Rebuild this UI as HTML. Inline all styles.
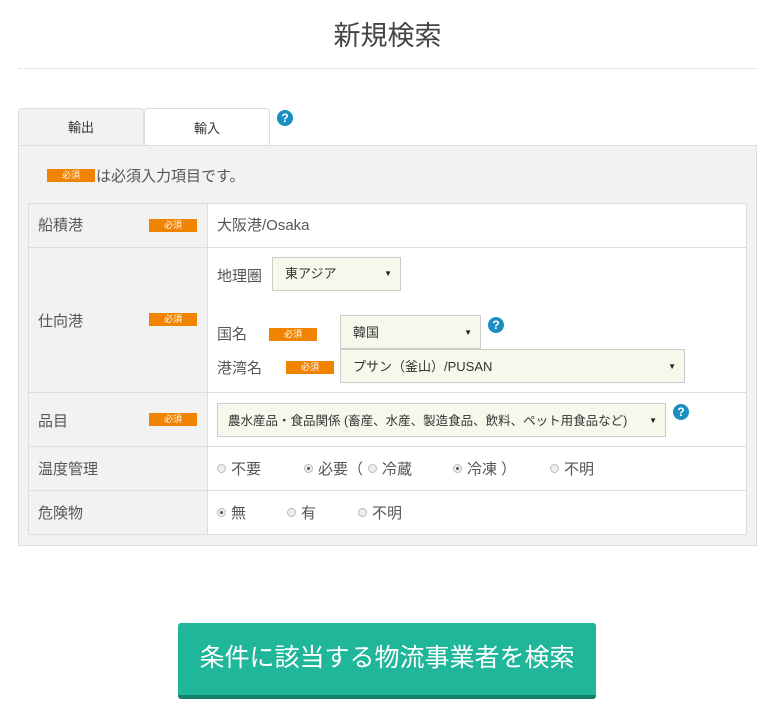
<!DOCTYPE html><html><head><meta charset="utf-8"><style>
body{margin:0;width:775px;height:717px;background:#fff;font-family:"Liberation Sans","Noto Sans CJK JP",sans-serif;color:#555;position:relative;overflow:hidden}
.a{position:absolute}
.req{position:absolute;background:#f08300;color:#fff;font-size:9px;text-align:center;line-height:13px;width:48px;height:13px}
.sel{position:absolute;background:#f7f7ec;border:1px solid #ccc;box-sizing:border-box;font-size:13px;color:#333;padding-left:12px}
.sel:after{content:"▼";position:absolute;right:8px;top:0;font-size:8px;color:#222}
.q{position:absolute;width:16px;height:16px;border-radius:50%;background:#1b8fc2;color:#fff;font-size:12px;font-weight:bold;text-align:center;line-height:16px}
.hl{position:absolute;left:28px;width:719px;height:1px;background:#ddd}
.r{display:inline-block;width:9px;height:9px;border-radius:50%;border:1px solid #bbb;background:#eee;box-sizing:border-box;vertical-align:1px;margin-right:5px;position:relative}
.r.on:after{content:"";position:absolute;left:2px;top:2px;width:3px;height:3px;border-radius:50%;background:#555}
.t{font-size:15px;color:#555;white-space:nowrap}
</style></head><body>
<div class="a" style="left:0;width:775px;top:14px;text-align:center;font-size:27px;color:#444">新規検索</div>
<div class="a" style="left:18px;width:739px;top:68px;border-top:1px dotted #ccc"></div>
<div class="a" style="left:18px;top:108px;width:126px;height:38px;background:#f2f2f2;border:1px solid #ddd;border-bottom:none;border-radius:4px 4px 0 0;box-sizing:border-box;text-align:center;line-height:38px;font-size:13px;color:#333">輸出</div>
<div class="a" style="left:144px;top:108px;width:126px;height:38px;background:#fff;border:1px solid #ddd;border-bottom:none;border-radius:4px 4px 0 0;box-sizing:border-box;text-align:center;line-height:40px;font-size:13px;color:#333">輸入</div>
<div class="q" style="left:277px;top:110px">?</div>
<div class="a" style="left:18px;top:145px;width:739px;height:401px;background:#f2f2f2;border:1px solid #ddd;box-sizing:border-box"></div>
<div class="req" style="left:47px;top:169px">必須</div>
<div class="a t" style="left:96px;top:165px">は必須入力項目です。</div>
<div class="a" style="left:28px;top:203px;width:719px;height:332px;background:#fff;border:1px solid #ddd;box-sizing:border-box"></div>
<div class="a" style="left:29px;top:204px;width:178px;height:330px;background:#f2f2f2;border-right:1px solid #ddd"></div>
<div class="hl" style="top:247px"></div><div class="hl" style="top:392px"></div><div class="hl" style="top:446px"></div><div class="hl" style="top:490px"></div>
<div class="a t" style="left:38px;top:214px">船積港</div><div class="req" style="left:149px;top:219px">必須</div>
<div class="a t" style="left:217px;top:214px">大阪港/Osaka</div>
<div class="a t" style="left:38px;top:310px">仕向港</div><div class="req" style="left:149px;top:313px">必須</div>
<div class="a t" style="left:217px;top:265px">地理圏</div>
<div class="sel" style="left:272px;top:257px;width:129px;height:34px;line-height:32px">東アジア</div>
<div class="a t" style="left:217px;top:323px">国名</div><div class="req" style="left:269px;top:328px">必須</div>
<div class="sel" style="left:340px;top:315px;width:141px;height:34px;line-height:34px">韓国</div>
<div class="q" style="left:488px;top:317px">?</div>
<div class="a t" style="left:217px;top:357px">港湾名</div><div class="req" style="left:286px;top:361px">必須</div>
<div class="sel" style="left:340px;top:349px;width:345px;height:34px;line-height:34px">プサン（釜山）/PUSAN</div>
<div class="a t" style="left:38px;top:410px">品目</div><div class="req" style="left:149px;top:413px">必須</div>
<div class="sel" style="left:217px;top:403px;width:449px;height:34px;line-height:34px;font-size:12.5px;padding-left:10px">農水産品・食品関係 (畜産、水産、製造食品、飲料、ペット用食品など)</div>
<div class="q" style="left:673px;top:404px">?</div>
<div class="a t" style="left:38px;top:458px">温度管理</div>
<div class="a t" style="left:217px;top:458px"><span class="r"></span>不要</div>
<div class="a t" style="left:304px;top:458px"><span class="r on"></span>必要（</div>
<div class="a t" style="left:368px;top:458px"><span class="r"></span>冷蔵</div>
<div class="a t" style="left:453px;top:458px"><span class="r on"></span>冷凍 ）</div>
<div class="a t" style="left:550px;top:458px"><span class="r"></span>不明</div>
<div class="a t" style="left:38px;top:502px">危険物</div>
<div class="a t" style="left:217px;top:502px"><span class="r on"></span>無</div>
<div class="a t" style="left:287px;top:502px"><span class="r"></span>有</div>
<div class="a t" style="left:358px;top:502px"><span class="r"></span>不明</div>
<div class="a" style="left:178px;top:623px;width:418px;height:72px;background:#1fb699;border-bottom:4px solid #167f6a;border-radius:3px;color:#fff;font-size:25px;text-align:center;line-height:70px">条件に該当する物流事業者を検索</div>
</body></html>
